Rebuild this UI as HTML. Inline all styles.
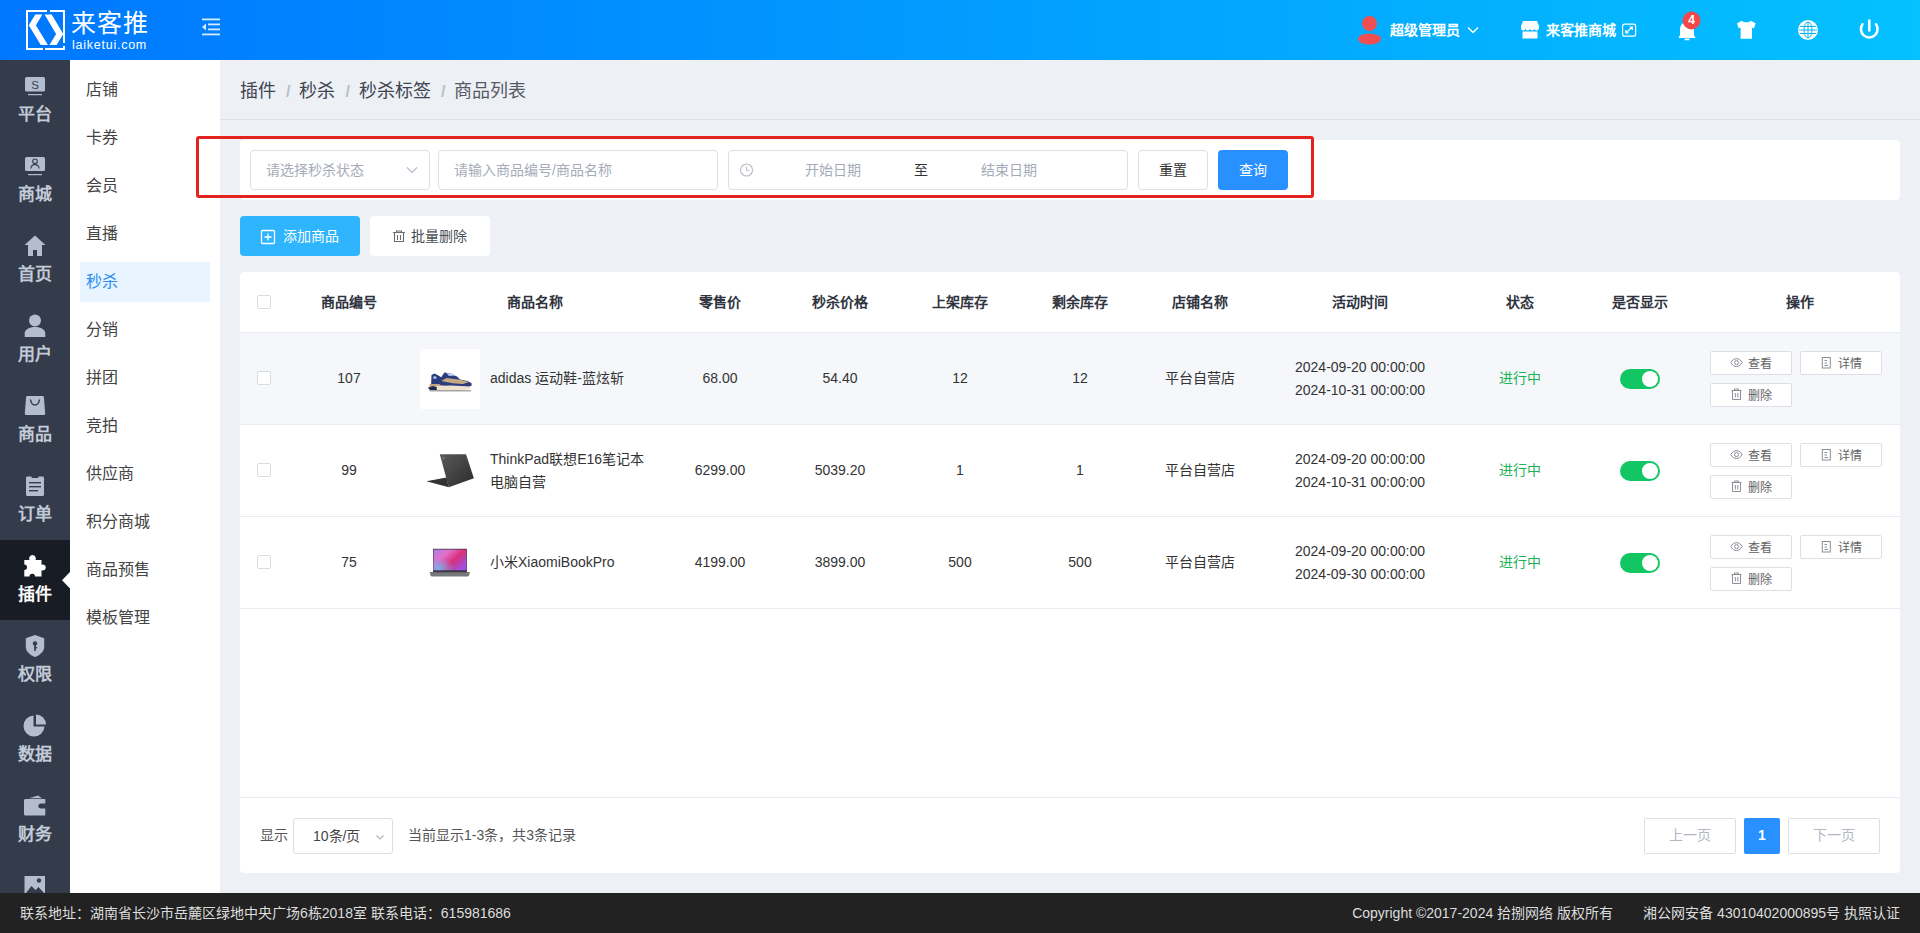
<!DOCTYPE html>
<html lang="zh-CN"><head><meta charset="utf-8">
<style>
*{margin:0;padding:0;box-sizing:border-box}
html,body{width:1920px;height:933px;overflow:hidden;font-family:"Liberation Sans",sans-serif;background:#edf0f5;position:relative}
.abs{position:absolute}
#hdr{left:0;top:0;width:1920px;height:60px;background:linear-gradient(90deg,#0077ff 0%,#04c1ff 100%)}
#side{left:0;top:60px;width:70px;height:833px;background:#343c4b;overflow:hidden}
.si{position:absolute;left:0;width:70px;height:80px;text-align:center;color:#c2c8d4;font-weight:bold;font-size:17px}
.si .lb{position:absolute;left:0;width:70px;top:43px;line-height:20px}
.si.act{background:#181d25;color:#fff}
#sub{left:70px;top:60px;width:150px;height:833px;background:#fff}
.mi{position:absolute;left:16px;font-size:16px;color:#444;line-height:20px}
#subact{left:80px;top:262px;width:130px;height:40px;background:#e8f4ff}
#bc{left:240px;top:79px;font-size:18px;color:#3f4450;line-height:24px;white-space:nowrap}
#bc .sep{color:#b6bfcc;margin:0 9px 0 10px;font-size:16px;font-weight:bold}
#bcline{left:220px;top:119px;width:1700px;height:1px;background:#dde1e8}
#filt{left:240px;top:140px;width:1660px;height:60px;background:#fff;border-radius:4px}
.inp{position:absolute;top:150px;height:40px;border:1px solid #dcdfe6;border-radius:4px;background:#fff;font-size:14px;color:#a6abb9;line-height:39px}
#redbox{left:196px;top:136px;width:1118px;height:62px;border:3px solid #e4231f;border-radius:3px}
.btn{position:absolute;height:40px;border-radius:4px;font-size:14px;line-height:40px;text-align:center}
#card{left:240px;top:272px;width:1660px;height:601px;background:#fff;border-radius:4px}
.th{position:absolute;top:293px;font-size:14px;font-weight:bold;color:#2f3440;line-height:18px;text-align:center}
.row{position:absolute;left:240px;width:1660px;height:92px;border-top:1px solid #e9ecf1}
.td{position:absolute;font-size:14px;color:#333;line-height:23px;text-align:center;white-space:nowrap}
.cb{position:absolute;left:257px;width:14px;height:14px;border:1px solid #d7dbe2;border-radius:2px;background:#fff}
.green{color:#1db257}
.sw{position:absolute;left:1620px;width:40px;height:20px;border-radius:10px;background:#12c663}
.sw:after{content:"";position:absolute;right:2px;top:2px;width:16px;height:16px;border-radius:50%;background:#fff}
.ob{position:absolute;width:82px;height:24px;border:1px solid #dcdfe6;border-radius:2px;background:#fff}
.opt{font-size:12px;color:#606266;line-height:14px;white-space:nowrap}
#foot{left:0;top:893px;width:1920px;height:40px;background:#222;color:#ddd;font-size:14px;line-height:40px}
</style></head><body>
<div id="hdr" class="abs">
<svg class="abs" style="left:0;top:0" width="240" height="60" viewBox="0 0 240 60">
<g fill="none" stroke="#fff" stroke-width="2">
<path d="M47 11H27V49H43"/><path d="M50 11H64V43"/><path d="M64 46V49H45"/><path d="M27 14V18" stroke="none"/>
</g>
<polygon fill="#fff" points="35.3,14.6 42.4,14.6 35.9,25.2 47.9,44.9 40.8,44.9 28.75,25.2"/>
<polygon fill="#fff" points="44.6,14.6 51.7,14.6 63.2,34 56.6,44.9 49.5,44.9 56.1,34"/>
<g fill="#d4ecff"><rect x="202" y="18.5" width="18" height="1.8"/><rect x="208" y="23.5" width="12" height="1.8"/><rect x="208" y="28.5" width="12" height="1.8"/><rect x="202" y="33.5" width="18" height="1.8"/><polygon points="202,27 206,23.5 206,30.5"/></g>
</svg>
<div class="abs" style="left:71px;top:6px;font-size:25px;line-height:34px;color:#fff;font-weight:300;letter-spacing:1px">来客推</div>
<div class="abs" style="left:72px;top:38px;font-size:12.5px;line-height:14px;color:#fff;letter-spacing:0.75px">laiketui.com</div>
<svg class="abs" style="left:1350px;top:0" width="570" height="60" viewBox="1350 0 570 60">
<circle cx="1369.5" cy="23.5" r="7.5" fill="#ef4f50"/><ellipse cx="1369.5" cy="39" rx="11.5" ry="5.5" fill="#ef4f50"/>
<path d="M1468 27.5l5 5 5-5" fill="none" stroke="#fff" stroke-width="1.5"/>
<path d="M1523 21h14l2 5v2c0 1.5-1 2.5-2.3 2.5s-2.2-1-2.2-2c0 1-1 2-2.3 2s-2.2-1-2.2-2c0 1-1 2-2.3 2s-2.2-1-2.2-2c0 1-1 2-2.3 2s-2.2-1-2.2-2.5v-2z" fill="#fff"/>
<path d="M1522.5 31.5h15v7h-15z" fill="#fff"/>
<rect x="1622.6" y="24.2" width="13" height="12" rx="2" fill="none" stroke="#fff" stroke-width="1.2"/><path d="M1625.8 33l6.6-6M1629.4 27h3v3M1625.8 30v3h3" fill="none" stroke="#fff" stroke-width="1.2"/>
<path d="M1687 22c-4.5 0-7 3.5-7 8v5l-1.5 3h17l-1.5-3v-5c0-4.5-2.5-8-7-8z" fill="#fff"/><rect x="1684.5" y="38.5" width="5" height="1.8" rx="0.9" fill="#fff"/>
<circle cx="1691.5" cy="20.5" r="9" fill="#f04a48"/>
<path d="M1742 20.8L1737 23.2 1738.6 28.2 1740.6 27.6V38.75H1752V27.6L1754 28.2 1755.6 23.2 1750.6 20.8C1749.5 22.8 1743.1 22.8 1742 20.8Z" fill="#fff"/>
<circle cx="1808" cy="30" r="10" fill="#fff"/>
<g fill="none" stroke="#0bb6f9" stroke-width="1"><ellipse cx="1808" cy="30" rx="4" ry="8"/><path d="M1808 22v16M1800 26.5h16M1800 33.5h16M1799 30h18"/></g>
<path d="M1862.5 24.3a8.3 8.3 0 1 0 13.5 0" fill="none" stroke="#fff" stroke-width="2.5" stroke-linecap="round"/><path d="M1869.3 20.5v10" stroke="#fff" stroke-width="2.5" stroke-linecap="round"/>
</svg>
<div class="abs" style="left:1390px;top:20px;font-size:14px;line-height:20px;color:#fff;font-weight:bold">超级管理员</div>
<div class="abs" style="left:1546px;top:20px;font-size:14px;line-height:20px;color:#fff;font-weight:bold">来客推商城</div>
<div class="abs" style="left:1682px;top:12px;width:19px;text-align:center;font-size:12px;line-height:17px;color:#fff;font-weight:bold">4</div>
</div>
<div id="side" class="abs">
<div class="si act" style="top:480px"></div>
<svg class="abs" style="left:0;top:0" width="70" height="833" viewBox="0 60 70 833">
<g fill="#b4bdcd">
<rect x="25" y="77" width="20" height="14.5" rx="1.5"/><rect x="28" y="94" width="14" height="1.2"/>
<rect x="25" y="157" width="20" height="14" rx="1.5"/><rect x="28" y="174" width="14" height="1.2"/>
<path d="M35 235.5l-10.5 9.5h3.5v11h5v-6h4v6h5v-11h3.5z"/>
<circle cx="35" cy="320.5" r="6"/><path d="M24.7 337v-3.5c0-4 4.5-6.5 10.3-6.5s10.3 2.5 10.3 6.5v3.5z"/>
<path d="M27.5 396h15c0.8 0 1.3 0.5 1.4 1.3l1.3 16.2c0 0.8-0.5 1.5-1.3 1.5h-17.8c-0.8 0-1.4-0.7-1.3-1.5l1.3-16.2c0.1-0.8 0.6-1.3 1.4-1.3z"/>
<path d="M27.5 476.5h15c0.9 0 1.5 0.6 1.5 1.5v16.5c0 0.9-0.6 1.5-1.5 1.5h-15c-0.9 0-1.5-0.6-1.5-1.5v-16.5c0-0.9 0.6-1.5 1.5-1.5z"/>
<path d="M35 635l9.2 3.3v8.5c0 4.5-3.8 8.2-9.2 10.2c-5.4-2-9.2-5.7-9.2-10.2v-8.5z"/>
<path d="M33.5 715.5a10.5 10.5 0 1 0 11 11h-11z"/><path d="M36 714.5v10h10a10 10 0 0 0-10-10z"/>
<path d="M38 795.5l4 2.7h-13z"/><path d="M25.5 799h19c0.5 0 0.8 0.3 0.8 0.8v3.7h-4.5c-1.5 0-2.5 1-2.5 2.5s1 2.5 2.5 2.5h4.5v6.3c0 0.5-0.3 0.8-0.8 0.8h-19c-0.8 0-1.5-0.7-1.5-1.5v-13.6c0-0.8 0.7-1.5 1.5-1.5z"/>
<path d="M24.5 876h20.5v17h-20.5z"/>
</g>
<g fill="#353d4c">
<path d="M30.5 399.5c0.5 3.5 2 5.5 4.5 5.5s4-2 4.5-5.5" fill="none" stroke="#353d4c" stroke-width="1.5"/>
<rect x="31.5" y="474.5" width="7" height="3.5" rx="1"/>
<rect x="29" y="482" width="12" height="1.4"/><rect x="29" y="486" width="12" height="1.4"/><rect x="29" y="490" width="9" height="1.4"/>
<circle cx="35" cy="643.5" r="2.2"/><rect x="34.2" y="644" width="1.6" height="7"/><rect x="34.2" y="647" width="3" height="1.4"/>
<circle cx="41" cy="806" r="1.2"/>
<path d="M26 893l5.5-7 4 4 3-3 5.5 6z"/><circle cx="39" cy="880.5" r="2.2"/>
</g>
<circle cx="35" cy="161.3" r="2.3" fill="none" stroke="#353d4c" stroke-width="1.1"/><path d="M30.8 168.5c0.4-2.6 2-3.9 4.2-3.9s3.8 1.3 4.2 3.9" fill="none" stroke="#353d4c" stroke-width="1.1"/>
<text x="35" y="88.7" text-anchor="middle" font-family="Liberation Sans" font-size="11.5" fill="#353d4c">S</text>
<path d="M24.3 560H29.5A3.4 3.4 0 1 1 35.5 560H41.5V564.8A3 3 0 1 1 41.5 570.2V576.5H35A2.75 2.75 0 0 0 29.5 576.5H24.3V570A2.7 2.7 0 0 0 24.3 564.6Z" fill="#fff"/>
<polygon points="70,572 62,580.3 70,588.5" fill="#fff"/>
</svg>
<div class="abs" style="left:0;top:45px;width:70px;text-align:center;font-size:17px;line-height:20px;font-weight:bold;color:#c3cad8">平台</div>
<div class="abs" style="left:0;top:125px;width:70px;text-align:center;font-size:17px;line-height:20px;font-weight:bold;color:#c3cad8">商城</div>
<div class="abs" style="left:0;top:205px;width:70px;text-align:center;font-size:17px;line-height:20px;font-weight:bold;color:#c3cad8">首页</div>
<div class="abs" style="left:0;top:285px;width:70px;text-align:center;font-size:17px;line-height:20px;font-weight:bold;color:#c3cad8">用户</div>
<div class="abs" style="left:0;top:365px;width:70px;text-align:center;font-size:17px;line-height:20px;font-weight:bold;color:#c3cad8">商品</div>
<div class="abs" style="left:0;top:445px;width:70px;text-align:center;font-size:17px;line-height:20px;font-weight:bold;color:#c3cad8">订单</div>
<div class="abs" style="left:0;top:525px;width:70px;text-align:center;font-size:17px;line-height:20px;font-weight:bold;color:#fff">插件</div>
<div class="abs" style="left:0;top:605px;width:70px;text-align:center;font-size:17px;line-height:20px;font-weight:bold;color:#c3cad8">权限</div>
<div class="abs" style="left:0;top:685px;width:70px;text-align:center;font-size:17px;line-height:20px;font-weight:bold;color:#c3cad8">数据</div>
<div class="abs" style="left:0;top:765px;width:70px;text-align:center;font-size:17px;line-height:20px;font-weight:bold;color:#c3cad8">财务</div>
</div>
<div id="sub" class="abs"></div>
<div id="subact" class="abs"></div>
<div class="mi abs" style="left:86px;top:80px">店铺</div>
<div class="mi abs" style="left:86px;top:128px">卡券</div>
<div class="mi abs" style="left:86px;top:176px">会员</div>
<div class="mi abs" style="left:86px;top:224px">直播</div>
<div class="mi abs" style="left:86px;top:272px;color:#2d8cf0">秒杀</div>
<div class="mi abs" style="left:86px;top:320px">分销</div>
<div class="mi abs" style="left:86px;top:368px">拼团</div>
<div class="mi abs" style="left:86px;top:416px">竞拍</div>
<div class="mi abs" style="left:86px;top:464px">供应商</div>
<div class="mi abs" style="left:86px;top:512px">积分商城</div>
<div class="mi abs" style="left:86px;top:560px">商品预售</div>
<div class="mi abs" style="left:86px;top:608px">模板管理</div>

<div id="bc" class="abs">插件<span class="sep">/</span>秒杀<span class="sep">/</span>秒杀标签<span class="sep">/</span><span style="color:#555a66">商品列表</span></div>
<div id="bcline" class="abs"></div>

<div id="filt" class="abs"></div>
<div class="inp" style="left:250px;width:180px;padding-left:15px">请选择秒杀状态</div>
<div class="inp" style="left:438px;width:280px;padding-left:15px">请输入商品编号/商品名称</div>
<div class="inp" style="left:728px;width:400px"><span class="abs" style="left:76px">开始日期</span><span class="abs" style="left:185px;color:#333">至</span><span class="abs" style="left:252px">结束日期</span></div>
<svg class="abs" style="left:0;top:0;pointer-events:none" width="1920" height="200">
<path d="M407 167.5l5 5 5-5" fill="none" stroke="#b4bac8" stroke-width="1.1"/>
<circle cx="746.5" cy="170" r="6" fill="none" stroke="#b8bcc4" stroke-width="1.1"/><path d="M746.5 166.5v3.8h3" fill="none" stroke="#b8bcc4" stroke-width="1.1"/>
</svg>
<div class="btn" style="left:1138px;top:150px;width:70px;border:1px solid #dcdfe6;background:#fff;color:#333;line-height:38px">重置</div>
<div class="btn" style="left:1218px;top:150px;width:70px;background:#2890ff;color:#fff">查询</div>
<div class="btn" style="left:240px;top:216px;width:120px;background:#2fb4fe;color:#fff;padding-left:22px">添加商品</div>
<div class="btn" style="left:370px;top:216px;width:120px;background:#fff;color:#4a4d55;padding-left:18px">批量删除</div>
<svg class="abs" style="left:0;top:0;pointer-events:none" width="520" height="260">
<rect x="261.5" y="230.5" width="13" height="13" rx="1" fill="none" stroke="#fff" stroke-width="1.3"/><path d="M268 233.5v7M264.5 237h7" stroke="#fff" stroke-width="1.3"/>
<path d="M393 232.5h12M396.5 232.5v-1.5h5v1.5M394.5 233v8.5h9v-8.5M397.5 235v5M400.5 235v5" fill="none" stroke="#6a6d74" stroke-width="1.1"/>
</svg>
<div id="redbox" class="abs"></div>

<div id="card" class="abs"></div>
<div class="abs" style="left:240px;top:333px;width:1660px;height:91px;background:#f5f7fa"></div>
<div class="abs" style="left:240px;top:332px;width:1660px;height:1px;background:#e8ebf0"></div>
<div class="abs" style="left:240px;top:424px;width:1660px;height:1px;background:#e8ebf0"></div>
<div class="abs" style="left:240px;top:516px;width:1660px;height:1px;background:#e8ebf0"></div>
<div class="abs" style="left:240px;top:608px;width:1660px;height:1px;background:#e8ebf0"></div>
<div class="abs" style="left:240px;top:797px;width:1660px;height:1px;background:#e8ebf0"></div>
<div class="cb" style="top:295px"></div><div class="cb" style="top:371px"></div><div class="cb" style="top:463px"></div><div class="cb" style="top:555px"></div>
<div class="th" style="left:289px;width:120px">商品编号</div><div class="th" style="left:475px;width:120px">商品名称</div><div class="th" style="left:660px;width:120px">零售价</div><div class="th" style="left:780px;width:120px">秒杀价格</div><div class="th" style="left:900px;width:120px">上架库存</div><div class="th" style="left:1020px;width:120px">剩余库存</div><div class="th" style="left:1140px;width:120px">店铺名称</div><div class="th" style="left:1300px;width:120px">活动时间</div><div class="th" style="left:1460px;width:120px">状态</div><div class="th" style="left:1580px;width:120px">是否显示</div><div class="th" style="left:1740px;width:120px">操作</div>
<div class="td" style="left:289px;top:367px;width:120px">107</div><div class="td" style="left:660px;top:367px;width:120px">68.00</div><div class="td" style="left:780px;top:367px;width:120px">54.40</div><div class="td" style="left:900px;top:367px;width:120px">12</div><div class="td" style="left:1020px;top:367px;width:120px">12</div><div class="td" style="left:1140px;top:367px;width:120px">平台自营店</div><div class="td" style="left:1260px;top:356px;width:200px;line-height:23px">2024-09-20 00:00:00<br>2024-10-31 00:00:00</div><div class="td green" style="left:1460px;top:367px;width:120px">进行中</div><div class="sw" style="top:369px"></div>
<div class="td" style="left:289px;top:459px;width:120px">99</div><div class="td" style="left:660px;top:459px;width:120px">6299.00</div><div class="td" style="left:780px;top:459px;width:120px">5039.20</div><div class="td" style="left:900px;top:459px;width:120px">1</div><div class="td" style="left:1020px;top:459px;width:120px">1</div><div class="td" style="left:1140px;top:459px;width:120px">平台自营店</div><div class="td" style="left:1260px;top:448px;width:200px;line-height:23px">2024-09-20 00:00:00<br>2024-10-31 00:00:00</div><div class="td green" style="left:1460px;top:459px;width:120px">进行中</div><div class="sw" style="top:461px"></div>
<div class="td" style="left:289px;top:551px;width:120px">75</div><div class="td" style="left:660px;top:551px;width:120px">4199.00</div><div class="td" style="left:780px;top:551px;width:120px">3899.00</div><div class="td" style="left:900px;top:551px;width:120px">500</div><div class="td" style="left:1020px;top:551px;width:120px">500</div><div class="td" style="left:1140px;top:551px;width:120px">平台自营店</div><div class="td" style="left:1260px;top:540px;width:200px;line-height:23px">2024-09-20 00:00:00<br>2024-09-30 00:00:00</div><div class="td green" style="left:1460px;top:551px;width:120px">进行中</div><div class="sw" style="top:553px"></div>
<div class="ob" style="left:1710px;top:351px"></div><div class="ob" style="left:1800px;top:351px"></div><div class="ob" style="left:1710px;top:383px"></div><div class="abs opt" style="left:1748px;top:357px">查看</div><div class="abs opt" style="left:1838px;top:357px">详情</div><div class="abs opt" style="left:1748px;top:389px">删除</div><svg class="abs" style="left:1700px;top:351px" width="200" height="60" viewBox="1700 351 200 60">
<g fill="none" stroke="#8a8e96" stroke-width="1">
<path d="M1730.8 362.6c1.5-2.6 3.5-3.9 5.7-3.9s4.2 1.3 5.7 3.9c-1.5 2.6-3.5 3.9-5.7 3.9s-4.2-1.3-5.7-3.9z"/><circle cx="1736.5" cy="362.6" r="2"/>
<rect x="1822.3" y="357.5" width="8" height="10.5"/><path d="M1824.5 360.5h2.5M1824.5 363h2.5M1824.5 365.5h3.5"/>
<path d="M1731.5 390.5h10M1734.5 390.5v-1.5h4v1.5M1732.5 391v8.5h8v-8.5M1735.3 393v4.5M1737.8 393v4.5"/>
</g></svg>
<div class="ob" style="left:1710px;top:443px"></div><div class="ob" style="left:1800px;top:443px"></div><div class="ob" style="left:1710px;top:475px"></div><div class="abs opt" style="left:1748px;top:449px">查看</div><div class="abs opt" style="left:1838px;top:449px">详情</div><div class="abs opt" style="left:1748px;top:481px">删除</div><svg class="abs" style="left:1700px;top:443px" width="200" height="60" viewBox="1700 351 200 60">
<g fill="none" stroke="#8a8e96" stroke-width="1">
<path d="M1730.8 362.6c1.5-2.6 3.5-3.9 5.7-3.9s4.2 1.3 5.7 3.9c-1.5 2.6-3.5 3.9-5.7 3.9s-4.2-1.3-5.7-3.9z"/><circle cx="1736.5" cy="362.6" r="2"/>
<rect x="1822.3" y="357.5" width="8" height="10.5"/><path d="M1824.5 360.5h2.5M1824.5 363h2.5M1824.5 365.5h3.5"/>
<path d="M1731.5 390.5h10M1734.5 390.5v-1.5h4v1.5M1732.5 391v8.5h8v-8.5M1735.3 393v4.5M1737.8 393v4.5"/>
</g></svg>
<div class="ob" style="left:1710px;top:535px"></div><div class="ob" style="left:1800px;top:535px"></div><div class="ob" style="left:1710px;top:567px"></div><div class="abs opt" style="left:1748px;top:541px">查看</div><div class="abs opt" style="left:1838px;top:541px">详情</div><div class="abs opt" style="left:1748px;top:573px">删除</div><svg class="abs" style="left:1700px;top:535px" width="200" height="60" viewBox="1700 351 200 60">
<g fill="none" stroke="#8a8e96" stroke-width="1">
<path d="M1730.8 362.6c1.5-2.6 3.5-3.9 5.7-3.9s4.2 1.3 5.7 3.9c-1.5 2.6-3.5 3.9-5.7 3.9s-4.2-1.3-5.7-3.9z"/><circle cx="1736.5" cy="362.6" r="2"/>
<rect x="1822.3" y="357.5" width="8" height="10.5"/><path d="M1824.5 360.5h2.5M1824.5 363h2.5M1824.5 365.5h3.5"/>
<path d="M1731.5 390.5h10M1734.5 390.5v-1.5h4v1.5M1732.5 391v8.5h8v-8.5M1735.3 393v4.5M1737.8 393v4.5"/>
</g></svg>
<div class="td" style="left:490px;top:367px;text-align:left">adidas 运动鞋-蓝炫斩</div>
<div class="td" style="left:490px;top:448px;text-align:left;line-height:23px">ThinkPad联想E16笔记本<br>电脑自营</div>
<div class="td" style="left:490px;top:551px;text-align:left">小米XiaomiBookPro</div>
<div class="abs" style="left:420px;top:349px;width:60px;height:60px;background:#fff"></div>
<svg class="abs" style="left:415px;top:340px" width="70" height="260" viewBox="415 340 70 260">
<defs>
<linearGradient id="lid" x1="0" y1="0" x2="1" y2="1"><stop offset="0" stop-color="#5a5a5a"/><stop offset="1" stop-color="#2b2b2b"/></linearGradient>
<linearGradient id="scr" x1="0" y1="0" x2="1" y2="0.7"><stop offset="0" stop-color="#b07ee8"/><stop offset="0.35" stop-color="#e070c8"/><stop offset="0.65" stop-color="#d8307a"/><stop offset="1" stop-color="#a050e0"/></linearGradient>
<radialGradient id="scr2" cx="0.15" cy="0.9" r="0.5"><stop offset="0" stop-color="#7ab0f0"/><stop offset="1" stop-color="#7ab0f0" stop-opacity="0"/></radialGradient>
</defs>
<!-- shoe -->
<polygon fill="#2d3c7c" points="431.1,385.5 431.5,375 434.5,373.5 437.5,375 441.3,377.3 444.3,372.4 450.3,373.5 457,376.5 460,379.5 467.5,381 471.6,383.3 471.6,385.5 467.5,387.8 457,387 439.8,385.5"/>
<polygon fill="#c7a882" points="446.5,378 460,379.8 469,382 463,384 452.5,383.3 441.3,381"/>
<polygon fill="#c4a47e" points="430,384 439.8,384 439.8,387 429.3,387"/>
<polygon fill="#eee2cf" points="433.75,385.9 451,385.5 470.5,386.6 469.8,389.3 460,390.4 437.5,390.8 434.5,389.3"/>
<polygon fill="#222a4a" points="427.75,387.8 433,386.1 436.75,387 436.75,390 430,390"/>
<rect x="429.5" y="390.2" width="41.5" height="1.2" fill="#6a6a6a" opacity="0.7"/>
<polygon fill="#a9c6ee" points="433,376.8 435.8,376 436.8,378.6 433.6,379"/>
<polygon fill="#b4cff2" points="446.5,373.3 452,373.5 455.5,375.6 449,376"/>
<!-- thinkpad -->
<path d="M426.3 481.3l20.2-3.8 2.3 9.8z" fill="#333"/>
<path d="M439.8 454.3h26.2l7.9 24-25.1 9z" fill="url(#lid)"/>
<path d="M442.5 457.5l1.8-0.5 0.4 1.5-1.8 0.5z" fill="#888"/>
<!-- xiaomi -->
<rect x="433" y="548.8" width="33.8" height="23" fill="#2a2a3a"/>
<rect x="433.5" y="549.5" width="32.8" height="21" fill="url(#scr)"/>
<rect x="433.5" y="549.5" width="32.8" height="21" fill="url(#scr2)"/>
<path d="M429.6 572h40.4l-1 3.5c-0.5 0.7-1 1-2 1h-34.5c-1 0-1.5-0.3-2-1z" fill="#77787c"/>
<rect x="433" y="570.5" width="33.8" height="1.8" fill="#3a3a44"/>
</svg>



<div class="abs" style="left:260px;top:825px;font-size:14px;line-height:20px;color:#555">显示</div>
<div class="abs" style="left:293px;top:818px;width:100px;height:36px;border:1px solid #dcdfe6;border-radius:3px;background:#fff;font-size:14px;line-height:34px;color:#444;padding-left:19px">10条/页</div>
<svg class="abs" style="left:372px;top:830px" width="16" height="16"><path d="M4.5 5.5l3.5 3.5 3.5-3.5" fill="none" stroke="#b0b4bc" stroke-width="1.1"/></svg>
<div class="abs" style="left:408px;top:825px;font-size:14px;line-height:20px;color:#555">当前显示1-3条，共3条记录</div>
<div class="abs" style="left:1644px;top:818px;width:92px;height:36px;border:1px solid #dcdfe6;border-radius:2px;background:#fff;font-size:14px;line-height:32px;color:#b1b8c5;text-align:center">上一页</div>
<div class="abs" style="left:1744px;top:818px;width:36px;height:36px;border-radius:2px;background:#2890ff;font-size:14px;line-height:34px;color:#fff;text-align:center;font-weight:bold">1</div>
<div class="abs" style="left:1788px;top:818px;width:92px;height:36px;border:1px solid #dcdfe6;border-radius:2px;background:#fff;font-size:14px;line-height:32px;color:#b1b8c5;text-align:center">下一页</div>
<div id="foot" class="abs"><span style="position:absolute;left:20px">联系地址：湖南省长沙市岳麓区绿地中央广场6栋2018室 联系电话：615981686</span><span style="position:absolute;right:307px">Copyright ©2017-2024 拾捌网络 版权所有</span><span style="position:absolute;right:20px">湘公网安备 43010402000895号 执照认证</span></div>
</body></html>
